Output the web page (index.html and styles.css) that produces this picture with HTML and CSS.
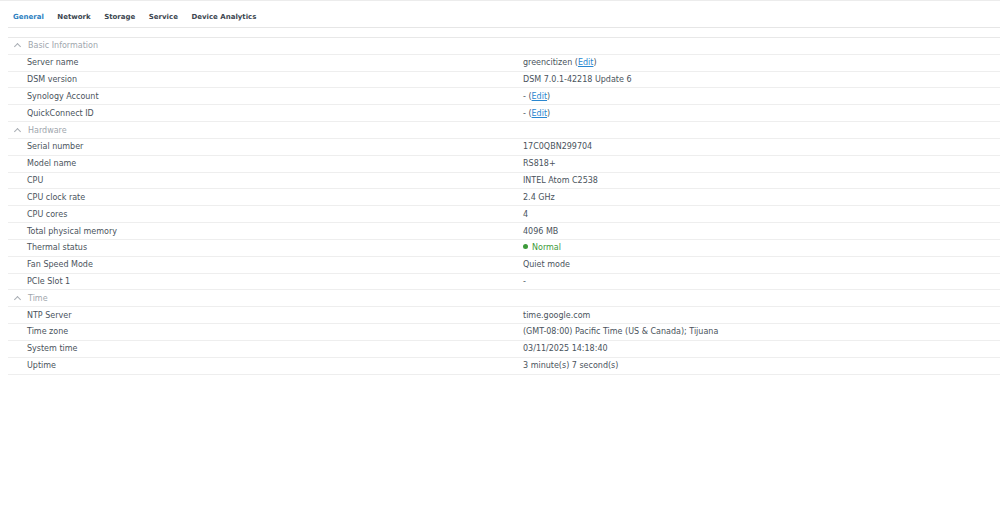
FILE: index.html
```
<!DOCTYPE html>
<html lang="en">
<head>
    <meta charset="utf-8">
    <title>Info Center</title>
    <link rel="stylesheet" href="styles.css">
</head>
<body>
    <div class="panel">
        <nav class="tabs">
            <a class="tab active">General</a>
            <a class="tab">Network</a>
            <a class="tab">Storage</a>
            <a class="tab">Service</a>
            <a class="tab">Device Analytics</a>
        </nav>

        <div class="info">
            <div class="group"><span class="chev"></span>Basic Information</div>
            <div class="row"><span class="key">Server name</span><span class="val">greencitizen (<a class="edit">Edit</a>)</span></div>
            <div class="row"><span class="key">DSM version</span><span class="val">DSM 7.0.1-42218 Update 6</span></div>
            <div class="row"><span class="key">Synology Account</span><span class="val">- (<a class="edit">Edit</a>)</span></div>
            <div class="row"><span class="key">QuickConnect ID</span><span class="val">- (<a class="edit">Edit</a>)</span></div>

            <div class="group"><span class="chev"></span>Hardware</div>
            <div class="row"><span class="key">Serial number</span><span class="val">17C0QBN299704</span></div>
            <div class="row"><span class="key">Model name</span><span class="val">RS818+</span></div>
            <div class="row"><span class="key">CPU</span><span class="val">INTEL Atom C2538</span></div>
            <div class="row"><span class="key">CPU clock rate</span><span class="val">2.4 GHz</span></div>
            <div class="row"><span class="key">CPU cores</span><span class="val">4</span></div>
            <div class="row"><span class="key">Total physical memory</span><span class="val">4096 MB</span></div>
            <div class="row"><span class="key">Thermal status</span><span class="val ok"><span class="dot"></span>Normal</span></div>
            <div class="row"><span class="key">Fan Speed Mode</span><span class="val">Quiet mode</span></div>
            <div class="row"><span class="key">PCIe Slot 1</span><span class="val">-</span></div>

            <div class="group"><span class="chev"></span>Time</div>
            <div class="row"><span class="key">NTP Server</span><span class="val">time.google.com</span></div>
            <div class="row"><span class="key">Time zone</span><span class="val">(GMT-08:00) Pacific Time (US &amp; Canada); Tijuana</span></div>
            <div class="row"><span class="key">System time</span><span class="val">03/11/2025 14:18:40</span></div>
            <div class="row"><span class="key">Uptime</span><span class="val">3 minute(s) 7 second(s)</span></div>
        </div>
    </div>
</body>
</html>
```

FILE: styles.css
```
/* Base */
body {margin: 0; background: #fff; font-family: "DejaVu Sans", Verdana, sans-serif; font-size: 8px; color: #4a535c}

.panel {padding-top: 1px; border-top: 1px solid #ececec}

/* Tabs */
.tabs {display: flex; gap: 13.5px; margin-left: 8px; padding: 5px 0 0 5px; height: 20px; align-items: center; border-bottom: 1px solid #e6e6e6}
.tab {font-weight: bold; font-size: 7px; color: #3c4650; cursor: pointer}
.tab.active {color: #2d7fc1}

/* Info grid */
.info {margin: 9px 0 0 8px; border-top: 1px solid #e8e8e8}
.row, .group {display: flex; align-items: center; height: 15.84px; border-bottom: 1px solid #eeeeee}
.group {color: #a0a6ad; padding-left: 6px}
.chev {width: 4px; height: 4px; border-left: 1px solid #a9aeb4; border-top: 1px solid #a9aeb4; transform: rotate(45deg); margin: 2px 8px 0 1px}
.key {width: 496px; padding-left: 19px}
.val {flex: 1}
.edit {color: #2a87d0; text-decoration: underline; cursor: pointer}
.ok {color: #3d9a3a}
.dot {display: inline-block; width: 5px; height: 5px; border-radius: 50%; background: #3d9a3a; margin-right: 4px; vertical-align: 1px}
```
